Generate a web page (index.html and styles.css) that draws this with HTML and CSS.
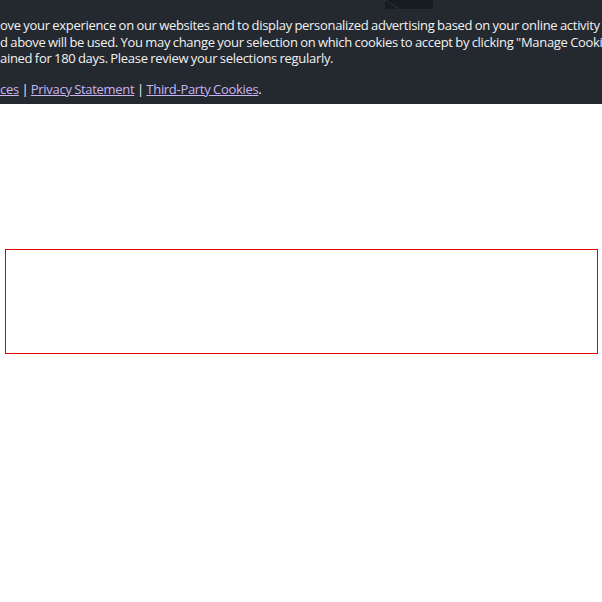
FILE: index.html
```html
<!DOCTYPE html>
<html>
<head>
<meta charset="utf-8">
<link rel="stylesheet" href="styles.css">
</head>
<body>
<div class="banner">
  <div class="logo-strip"><svg width="48" height="9" viewBox="0 0 48 9"><line x1="0" y1="0" x2="14" y2="9" stroke="#2e333c" stroke-width="1"/></svg></div>
  <div class="text">
    <div class="line">ove your experience on our websites and to display personalized advertising based on your online activity</div>
    <div class="line">d above will be used. You may change your selection on which cookies to accept by clicking "Manage Cookies"</div>
    <div class="line">ained for 180 days. Please review your selections regularly.</div>
  </div>
  <div class="links"><a href="#">ces</a> | <a href="#">Privacy Statement</a> | <a href="#">Third-Party Cookies</a>.</div>
</div>
<div class="frame"></div>
</body>
</html>
```
FILE: styles.css
```css
html, body { margin: 0; padding: 0; background: #fff; }
body { font-family: "Open Sans", "Noto Sans", sans-serif; }
.banner {
  background: #24282f;
  color: #f2f2f2;
  height: 104px;
  overflow: hidden;
  font-size: 13px;
  letter-spacing: -0.3px;
  word-spacing: -0.5px;
}
.logo-strip {
  margin-left: 385px;
  width: 48px;
  height: 9px;
  background: #171b22;
  display: flex;
}
.text { margin-top: 8px; }
.line { white-space: nowrap; line-height: 16.5px; }
.links { margin-top: 14px; line-height: 16px; white-space: nowrap; }
.links a { color: #c8b4f2; text-decoration: underline; }
.frame {
  margin: 145px 4px 0 5px;
  height: 103px;
  border: 1px solid #e00000;
}
```
